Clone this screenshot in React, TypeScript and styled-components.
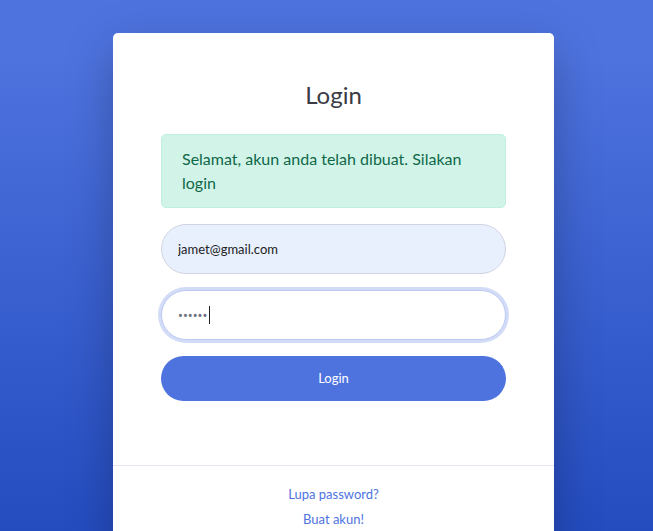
import React from "react";
import styled, { createGlobalStyle } from "styled-components";

const GlobalStyle = createGlobalStyle`
	html, body {
		margin: 0;
		padding: 0;
		height: 100%;
	}
	body {
		font-family: Lato, "Noto Sans", sans-serif;
		overflow: hidden;
	}
`;

const Page = styled.div`
	min-height: 100vh;
	background: linear-gradient(180deg, #4e73df 10%, #224abe 100%);
	display: flex;
	justify-content: center;
	align-items: flex-start;
	padding: 33px 0 0 14px;
	box-sizing: border-box;
`;

const Card = styled.div`
	width: 441px;
	background: #fff;
	border-radius: 5px;
	box-shadow: 0 1rem 3rem rgba(0, 0, 0, 0.25);
`;

const CardBody = styled.div`
	padding: 48px 48px 49px;
`;

const Title = styled.h1`
	margin: 0 0 24px;
	font-size: 24px;
	line-height: 1.2;
	font-weight: 400;
	color: #3a3b45;
	text-align: center;
`;

const Alert = styled.div`
	margin-bottom: 16px;
	padding: 12px 20px;
	border: 1px solid #bff0de;
	border-radius: 5px;
	background: #d2f4e8;
	color: #0f6848;
	font-size: 16px;
	line-height: 24px;
`;

const Form = styled.form`
	display: flex;
	flex-direction: column;
	gap: 16px;
`;

const Field = styled.div`
	position: relative;
	display: flex;
	flex-direction: column;
`;

const Input = styled.input<{ $autofill?: boolean }>`
	height: 50px;
	box-sizing: border-box;
	padding: 0 16px;
	border: 1px solid #d1d3e2;
	border-radius: 10rem;
	font-family: Lato, "Noto Sans", sans-serif;
	font-size: 13px;
	color: #222;
	background: ${p => (p.$autofill ? "#e8f0fe" : "#fff")};
	outline: none;
	caret-color: transparent;

	&[data-focus="true"] {
		border-color: #bac8f3;
		box-shadow: 0 0 0 3px rgba(78, 115, 223, 0.25);
	}

	&[type="password"] {
		font-family: "Noto Sans", sans-serif;
		color: #6e707e;
	}
`;

const Caret = styled.span`
	position: absolute;
	left: 48px;
	top: 16px;
	width: 1px;
	height: 18px;
	background: #222;
`;

const Button = styled.button`
	height: 45px;
	border: none;
	border-radius: 10rem;
	background: #4e73df;
	color: #fff;
	font-family: Lato, "Noto Sans", sans-serif;
	font-size: 13px;
`;

const Divider = styled.hr`
	margin: 15px 0 0;
	border: 0;
	border-top: 1px solid #e3e6f0;
`;

const Links = styled.div`
	display: flex;
	flex-direction: column;
	align-items: center;
	gap: 6px;
	padding: 19px 0 30px;
`;

const LinkText = styled.a`
	font-size: 13px;
	line-height: 19px;
	color: #4e73df;
	text-decoration: none;
`;

const App = () => {
	return (
		<>
			<GlobalStyle />
			<Page>
				<Card>
					<CardBody>
						<Title>Login</Title>
						<Alert>Selamat, akun anda telah dibuat. Silakan login</Alert>
						<Form onSubmit={e => e.preventDefault()}>
							<Input
								type="email"
								$autofill
								defaultValue="jamet@gmail.com"
								placeholder="Masukkan email..."
							/>
							<Field>
								<Input
									type="password"
									defaultValue="123456"
									data-focus="true"
									placeholder="Password"
								/>
								<Caret />
							</Field>
							<Button type="submit">Login</Button>
						</Form>
					</CardBody>
					<Divider />
					<Links>
						<LinkText href="#">Lupa password?</LinkText>
						<LinkText href="#">Buat akun!</LinkText>
					</Links>
				</Card>
			</Page>
		</>
	);
};

export default App;
